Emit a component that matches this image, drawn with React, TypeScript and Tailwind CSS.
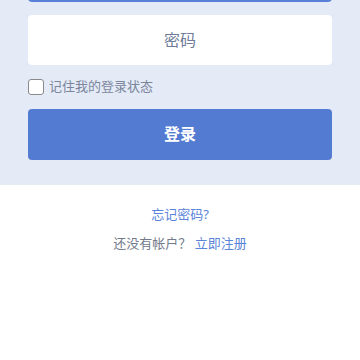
import { useState } from 'react';

export default function App() {
  const [remember, setRemember] = useState(false);

  return (
    <div
      className="w-[360px] h-[360px] overflow-hidden bg-white"
      style={{ fontFamily: '"Noto Sans", "Noto Sans CJK SC", sans-serif' }}
    >
      {/* Form panel */}
      <div className="bg-[#e4eaf6] px-7 pb-[25px]">
        <div className="-mt-[48px] flex flex-col">
          <input
            type="text"
            placeholder="用户名"
            className="h-[50px] w-full rounded-[4px] border-2 border-[#5a7fd6] bg-white text-center text-[16px] text-[#6b7897] placeholder-[#6b7897] outline-none"
          />
          <input
            type="password"
            placeholder="密码"
            className="mt-[13px] h-[50px] w-full rounded-[4px] bg-white text-center text-[16px] text-[#6b7897] placeholder-[#6f7c99] outline-none"
          />
          <label className="mt-[12px] flex items-center gap-[5px] text-[13px] text-[#7b869d]">
            <input
              type="checkbox"
              checked={remember}
              onChange={(e) => setRemember(e.target.checked)}
              className="h-4 w-4 appearance-none rounded-[3px] border-[1.5px] border-[#8a8a8a] bg-white"
            />
            记住我的登录状态
          </label>
          <button className="mt-[12px] h-[51px] w-full rounded-[4px] bg-[#547bd2] text-[16px] font-bold text-white">
            登录
          </button>
        </div>
      </div>

      {/* Links */}
      <div className="flex flex-col items-center pt-[20px] text-[13px]">
        <a className="leading-[18px] text-[#5a84d9]">忘记密码?</a>
        <div className="mt-[11px] leading-[18px] text-[#737b8c]">
          还没有帐户？ <a className="text-[#5a84d9]">立即注册</a>
        </div>
      </div>
    </div>
  );
}
